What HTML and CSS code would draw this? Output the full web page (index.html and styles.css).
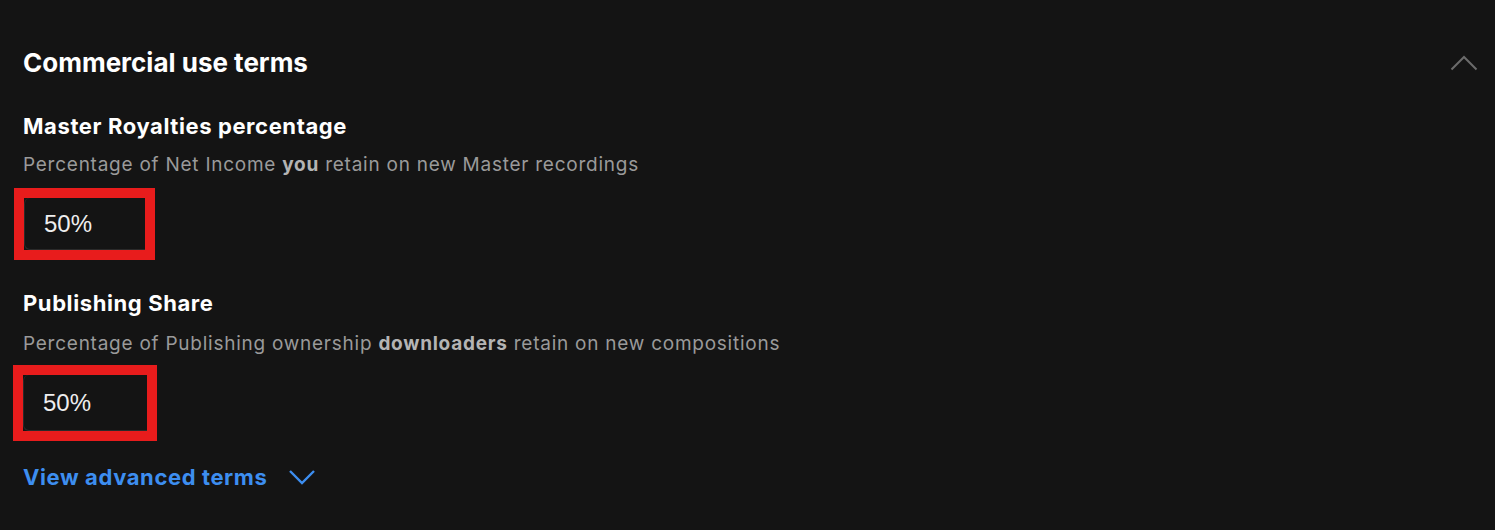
FILE: index.html
```html
<!DOCTYPE html>
<html>
<head>
<meta charset="utf-8">
<link rel="stylesheet" href="styles.css">
</head>
<body>
<section class="panel">
  <div class="panel-head">
    <h2 class="title">Commercial use terms</h2>
    <svg class="collapse" width="28" height="16" viewBox="0 0 28 16"><path d="M1.5 14.5 L14 2 L26.5 14.5" fill="none" stroke="#6b6b6b" stroke-width="2"/></svg>
  </div>
  <div class="field">
    <h3 class="label">Master Royalties percentage</h3>
    <p class="desc">Percentage of Net Income <b>you</b> retain on new Master recordings</p>
    <div class="mark mark-a"><div class="input">50%</div></div>
  </div>
  <div class="field field-b">
    <h3 class="label">Publishing Share</h3>
    <p class="desc">Percentage of Publishing ownership <b>downloaders</b> retain on new compositions</p>
    <div class="mark mark-b"><div class="input">50%</div></div>
  </div>
  <a class="advanced" href="#">View advanced terms
    <svg width="28" height="16" viewBox="0 0 28 16"><path d="M2 2 L14 14 L26 2" fill="none" stroke="#3d8ef0" stroke-width="2.4"/></svg>
  </a>
</section>
</body>
</html>
```
FILE: styles.css
```css
html, body { margin: 0; padding: 0; background: #141414; }
body { font-family: Inter, "Noto Sans", sans-serif; color: #fff; }
.panel { padding: 44px 17px 0 23px; }
.panel-head { display: flex; justify-content: space-between; align-items: center; height: 36px; }
.title { margin: 0; font-size: 26px; font-weight: 700; letter-spacing: 0; }
.collapse { margin-top: 2px; }
.field { display: flex; flex-direction: column; align-items: flex-start; }
.label { margin: 0; font-size: 22px; font-weight: 700; letter-spacing: 0.6px; line-height: 28px; }
.panel-head + .field .label { margin-top: 32px; }
.desc { margin: 13px 0 0; font-size: 19px; color: #9a9a9a; line-height: 24px; letter-spacing: 0.75px; }
.field-b .desc { margin-top: 15px; }
.desc b { color: #b4b4b4; font-weight: 700; }
.mark { border: 10px solid #e81c1c; box-sizing: border-box; }
.mark-a { margin: 11px 0 0 -9px; width: 141px; height: 72px; }
.mark-b { margin: 9px 0 0 -10px; width: 144px; height: 76px; }
.input { height: 100%; box-sizing: border-box; border: 1px solid #2a2a2a; border-right: none; border-top: none; border-radius: 6px 0 0 6px; padding-left: 19px; display: flex; align-items: center; font-family: "Liberation Sans", Arial, sans-serif; font-size: 24px; color: #eee; }
.field-b .label { margin-top: 29px; }
.advanced { display: inline-flex; align-items: center; gap: 21px; margin-top: 23px; font-size: 22px; font-weight: 700; color: #3d8ef0; text-decoration: none; letter-spacing: 0.6px; }
```
